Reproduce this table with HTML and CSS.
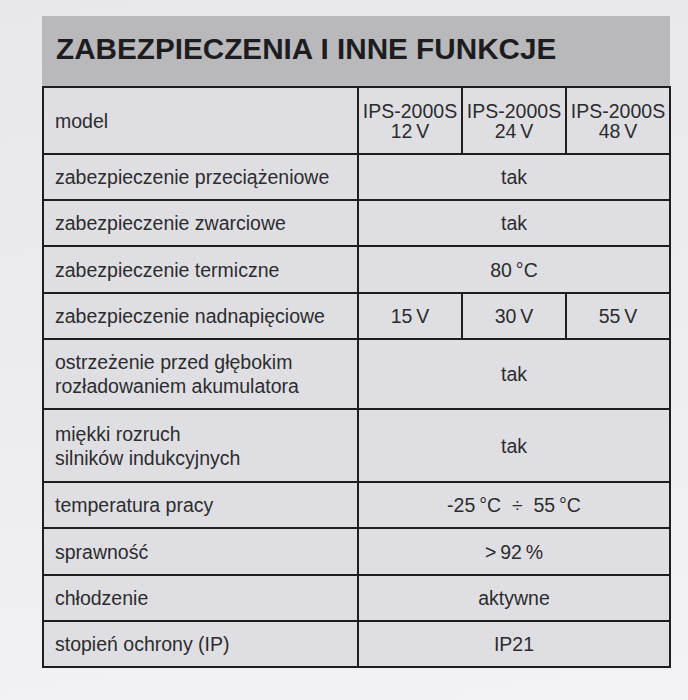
FILE: index.html
```html
<!DOCTYPE html>
<html lang="pl">
<head>
<meta charset="utf-8">
<title>Zabezpieczenia i inne funkcje</title>
<link rel="stylesheet" href="styles.css">
</head>
<body>
<div class="sheet">
  <div class="band"><h1 class="title">ZABEZPIECZENIA I INNE FUNKCJE</h1></div>
  <table class="spec">
    <colgroup>
      <col class="c-label">
      <col class="c-val">
      <col class="c-val">
      <col class="c-val">
    </colgroup>
    <tr class="r-model">
      <td class="label">model</td>
      <td class="val two">IPS-2000S<br>12&#8201;V</td>
      <td class="val two">IPS-2000S<br>24&#8201;V</td>
      <td class="val two">IPS-2000S<br>48&#8201;V</td>
    </tr>
    <tr class="r46">
      <td class="label">zabezpieczenie przeciążeniowe</td>
      <td class="val" colspan="3">tak</td>
    </tr>
    <tr class="r46">
      <td class="label">zabezpieczenie zwarciowe</td>
      <td class="val" colspan="3">tak</td>
    </tr>
    <tr class="r47">
      <td class="label">zabezpieczenie termiczne</td>
      <td class="val" colspan="3">80&#8201;°C</td>
    </tr>
    <tr class="r46">
      <td class="label">zabezpieczenie nadnapięciowe</td>
      <td class="val">15&#8201;V</td>
      <td class="val">30&#8201;V</td>
      <td class="val">55&#8201;V</td>
    </tr>
    <tr class="r70">
      <td class="label two">ostrzeżenie przed głębokim<br>rozładowaniem akumulatora</td>
      <td class="val" colspan="3">tak</td>
    </tr>
    <tr class="r73">
      <td class="label two">miękki rozruch<br>silników indukcyjnych</td>
      <td class="val" colspan="3">tak</td>
    </tr>
    <tr class="r46">
      <td class="label">temperatura pracy</td>
      <td class="val" colspan="3">-25&#8201;°C&nbsp; ÷&nbsp; 55&#8201;°C</td>
    </tr>
    <tr class="r47">
      <td class="label">sprawność</td>
      <td class="val" colspan="3">&gt;&#8201;92&#8201;%</td>
    </tr>
    <tr class="r46">
      <td class="label">chłodzenie</td>
      <td class="val" colspan="3">aktywne</td>
    </tr>
    <tr class="r46">
      <td class="label">stopień ochrony (IP)</td>
      <td class="val" colspan="3">IP21</td>
    </tr>
  </table>
</div>
</body>
</html>
```
FILE: styles.css
```css
html, body {
  margin: 0;
  padding: 0;
}
body {
  width: 688px;
  height: 700px;
  overflow: hidden;
  background: linear-gradient(170deg, #e8e8ec 0%, #ececef 45%, #f3f3f5 100%);
  font-family: "Liberation Sans", Arial, sans-serif;
  color: #2c2c2f;
}
.sheet {
  padding: 16px 0 0 42px;
  width: 628px;
}
.band {
  background: #b9b9bc;
  height: 70px;
  display: flex;
  align-items: center;
  padding-left: 14px;
  box-sizing: border-box;
}
.title {
  margin: 0 0 4px 0;
  font-size: 29.7px;
  font-weight: bold;
  color: #1d1d1f;
  line-height: 1;
}
.spec {
  width: 628px;
  border-collapse: collapse;
  border: 2px solid #1e1e20;
  background: #dfdfe3;
  table-layout: fixed;
}
.c-label { width: 315px; }
.c-val { width: 104px; }
.spec td {
  border: 2px solid #1e1e20;
  padding: 0;
  font-size: 19.5px;
  line-height: 20px;
  vertical-align: middle;
}
.label {
  text-align: left;
  padding-left: 11px !important;
}
.label.two { line-height: 24px; }
.val {
  text-align: center;
}
.val.two { line-height: 20px; }
.r-model td { height: 65px; }
.r46 td { height: 44px; }
.r47 td { height: 45px; }
.r70 td { height: 68px; }
.r73 td { height: 71px; }
```
